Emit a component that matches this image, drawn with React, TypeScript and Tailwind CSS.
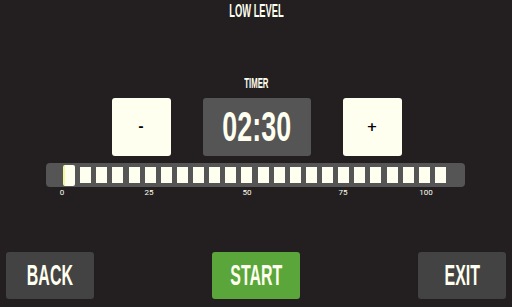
const SEGMENTS = Array.from({ length: 23 });

const SCALE = [
  { label: '0', ml: 'ml-[50px]' },
  { label: '25', ml: 'ml-[63px]' },
  { label: '50', ml: 'ml-[74px]' },
  { label: '75', ml: 'ml-[72px]' },
  { label: '100', ml: 'ml-[59px]' },
];

const font = "font-['Liberation_Sans',Arial,sans-serif] font-bold";

function StepButton({ sign }: { sign: string }) {
  return (
    <button className="w-[59px] h-[58px] rounded-[3px] bg-[#fffff0] flex items-center justify-center text-black text-[13px] font-bold font-['DejaVu_Sans',sans-serif]">
      {sign}
    </button>
  );
}

function NavButton({ label, green }: { label: string; green?: boolean }) {
  return (
    <button
      className={
        green
          ? 'w-[88px] h-[47px] rounded-[3px] bg-[#5aa63b] flex items-center justify-center'
          : 'w-[88px] h-[47px] rounded-[3px] bg-[#434343] flex items-center justify-center'
      }
    >
      <span className={`${font} text-[29px] leading-none text-[#fffff0] inline-block scale-x-[0.55]`}>{label}</span>
    </button>
  );
}

export default function App() {
  return (
    <div className="w-[512px] h-[307px] bg-[#231f20] flex flex-col overflow-hidden">
      {/* titel */}
      <div className="h-[21px] flex items-center justify-center">
        <span className={`${font} text-[18px] leading-none text-[#fffff0] inline-block scale-x-[0.52]`}>LOW LEVEL</span>
      </div>

      <div className="mt-[51px] h-[21px] flex items-center justify-center">
        <span className={`${font} text-[15px] leading-none text-[#fffff0] inline-block scale-x-[0.52]`}>TIMER</span>
      </div>

      {/* timer-rad */}
      <div className="mt-[5px] flex justify-center gap-[32px] pl-[1px]">
        <StepButton sign="-" />
        <div className="w-[108px] h-[58px] rounded-[3px] bg-[#555555] flex items-center justify-center">
          <span className={`${font} text-[42px] leading-none text-[#fffff0] inline-block scale-x-[0.64]`}>02:30</span>
        </div>
        <StepButton sign="+" />
      </div>

      {/* slider */}
      <div className="mt-[7px] ml-[46px] w-[419px] h-[24px] rounded-[4px] bg-[#555555] flex items-center pl-[17px]">
        <div className="w-[383px] flex items-center justify-between">
          <div className="w-[12px] h-[21px] rounded-[2px] bg-[#fffff0] border-l-2 border-[#f4f79a]" />
          {SEGMENTS.map((_, i) => (
            <div key={i} className="w-[11px] h-[16px] bg-[#fffff0]" />
          ))}
        </div>
      </div>

      <div className="h-[12px] flex items-center">
        {SCALE.map(({ label, ml }) => (
          <span key={label} className={`${ml} w-[24px] text-center text-[8px] leading-none text-[#fffff0] font-['Roboto',sans-serif]`}>
            {label}
          </span>
        ))}
      </div>

      {/* knappar */}
      <div className="mt-[53px] px-[6px] flex justify-between">
        <NavButton label="BACK" />
        <NavButton label="START" green />
        <NavButton label="EXIT" />
      </div>
    </div>
  );
}
